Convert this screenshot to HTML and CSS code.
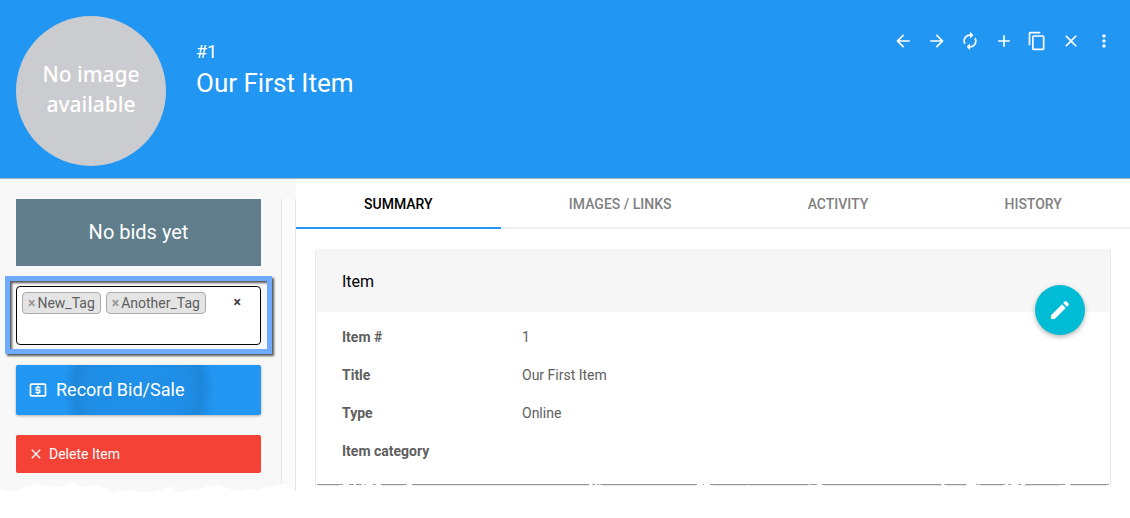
FILE: index.html
```html
<!DOCTYPE html>
<html lang="en">
<head>
	<meta charset="UTF-8">
	<title>Our First Item</title>
	<link rel="stylesheet" href="styles.css">
</head>
<body>
	<header class="header">
		<div class="avatar">No image available</div>
		<div class="heading">
			<div class="number">#1</div>
			<h1>Our First Item</h1>
		</div>
		<div class="toolbar">
			<button type="button" aria-label="Previous"><svg viewBox="0 0 24 24"><path d="M20 11H7.8l5.6-5.6L12 4l-8 8 8 8 1.4-1.4L7.8 13H20z"/></svg></button>
			<button type="button" aria-label="Next"><svg viewBox="0 0 24 24"><path d="M12 4l-1.4 1.4 5.6 5.6H4v2h12.2l-5.6 5.6L12 20l8-8z"/></svg></button>
			<button type="button" aria-label="Refresh"><svg viewBox="0 0 24 24"><path d="M12 6v3l4-4-4-4v3c-4.42 0-8 3.58-8 8 0 1.57.46 3.03 1.24 4.26L6.7 14.8A5.87 5.87 0 0 1 6 12c0-3.31 2.69-6 6-6zm6.76 1.74L17.3 9.2c.44.84.7 1.79.7 2.8 0 3.31-2.69 6-6 6v-3l-4 4 4 4v-3c4.42 0 8-3.58 8-8 0-1.57-.46-3.03-1.24-4.26z"/></svg></button>
			<button type="button" aria-label="Add"><svg viewBox="0 0 24 24"><path d="M19 13h-6v6h-2v-6H5v-2h6V5h2v6h6z"/></svg></button>
			<button type="button" aria-label="Copy"><svg viewBox="0 0 24 24"><path d="M16 1H4c-1.1 0-2 .9-2 2v14h2V3h12V1zm3 4H8c-1.1 0-2 .9-2 2v14c0 1.1.9 2 2 2h11c1.1 0 2-.9 2-2V7c0-1.1-.9-2-2-2zm0 16H8V7h11v14z"/></svg></button>
			<button type="button" aria-label="Delete"><svg viewBox="0 0 24 24"><path d="M19 6.41L17.59 5 12 10.59 6.41 5 5 6.41 10.59 12 5 17.59 6.41 19 12 13.41 17.59 19 19 17.59 13.41 12z"/></svg></button>
			<button type="button" aria-label="More"><svg viewBox="0 0 24 24"><path d="M12 8c1.1 0 2-.9 2-2s-.9-2-2-2-2 .9-2 2 .9 2 2 2zm0 2c-1.1 0-2 .9-2 2s.9 2 2 2 2-.9 2-2-.9-2-2-2zm0 6c-1.1 0-2 .9-2 2s.9 2 2 2 2-.9 2-2-.9-2-2-2z"/></svg></button>
		</div>
	</header>

	<div class="page">
		<aside class="sidebar">
			<div class="actions">
				<div class="bids">No bids yet</div>
				<div class="highlight">
					<div class="tags">
						<ul>
							<li><button type="button" aria-label="Remove New_Tag">×</button>New_Tag</li>
							<li><button type="button" aria-label="Remove Another_Tag">×</button>Another_Tag</li>
						</ul>
						<button type="button" class="clear" aria-label="Remove all tags">×</button>
						<input type="text" aria-label="Tags">
					</div>
				</div>
				<button type="button" class="btn record">
					<svg viewBox="0 0 24 24"><path d="M20 4H4c-1.1 0-2 .9-2 2v12c0 1.1.9 2 2 2h16c1.1 0 2-.9 2-2V6c0-1.1-.9-2-2-2zm0 14H4V6h16v12zm-9-1h2v-1h1c.55 0 1-.45 1-1v-3c0-.55-.45-1-1-1h-3v-1h4V8h-2V7h-2v1h-1c-.55 0-1 .45-1 1v3c0 .55.45 1 1 1h3v1H9v2h2v1z"/></svg>
					Record Bid/Sale
				</button>
				<button type="button" class="btn delete">
					<svg viewBox="0 0 24 24"><path d="M19 6.41L17.59 5 12 10.59 6.41 5 5 6.41 10.59 12 5 17.59 6.41 19 12 13.41 17.59 19 19 17.59 13.41 12z"/></svg>
					Delete Item
				</button>
			</div>
			<div class="track"></div>
			<svg class="torn" viewBox="0 0 296 13" preserveAspectRatio="none"><path d="M0 6L2 8 5 9 8 9 11 10 14 8 18 8 21 7 24 5 26 5 28 4 31 4 32 2 36 1 38 3 40 3 44 3 46 4 49 3 51 5 57 5 59 5 61 4 65 4 67 2 69 3 70 1 74 1 76 3 77 3 81 5 84 5 86 4 90 5 92 3 94 4 97 3 98 4 103 6 106 6 108 8 110 9 112 11 114 11 116 9 120 9 124 8 127 9 132 8 135 8 137 10 141 10 144 9 149 10 151 9 154 11 156 8 160 8 163 7 165 5 167 6 170 5 172 5 174 8 176 8 178 10 181 10 184 9 187 9 190 7 196 7 199 7 204 6 207 4 210 5 213 3 215 3 219 2 221 4 223 5 226 5 229 6 231 8 234 8 237 8 240 9 243 9 246 7 250 7 253 7 256 8 259 8 262 6 265 6 268 5 270 5 273 4 276 4 279 2 286 2 288 5 290 5 294 9 296 9V13H0z"/></svg>
		</aside>

		<main class="main">
			<nav class="tabs">
				<a href="#summary" class="active">Summary</a>
				<a href="#images">Images / Links</a>
				<a href="#activity">Activity</a>
				<a href="#history">History</a>
			</nav>
			<section class="card" id="summary">
				<h2>Item</h2>
				<dl>
					<dt>Item #</dt>
					<dd>1</dd>
					<dt>Title</dt>
					<dd>Our First Item</dd>
					<dt>Type</dt>
					<dd>Online</dd>
					<dt>Item category</dt>
					<dd></dd>
				</dl>
				<svg class="edge" viewBox="0 0 796 2" preserveAspectRatio="none"><path class="dark" d="M1 .5h26m6 0h5m2 0h6m3 0h1m7 0h3m5 0h26m5 0h178m3 0h3m2 0h2m1 0h97m6 0h1m6 0h99m1 0h7m5 0h120m3 0h22m10 0h2m1 0h26m3 0h3m7 0h3m4 0h40m5 0h39"/><path class="light" d="M3 1.500h20m43 0h22m9 0h176m14 0h94m17 0h34m3 0h58m16 0h118m5 0h20m14 0h22m21 0h36m12 0h35"/></svg>
				<button type="button" class="edit" aria-label="Edit"><svg viewBox="0 0 24 24"><path d="M3 17.250V21h3.750L17.810 9.940l-3.750-3.750L3 17.250zM20.710 7.040a1 1 0 0 0 0-1.410l-2.340-2.340a1 1 0 0 0-1.410 0l-1.830 1.830 3.750 3.750 1.830-1.830z"/></svg></button>
			</section>
		</main>
	</div>
</body>
</html>
```
FILE: styles.css
```css
*{
	box-sizing: border-box;
}
body{
	margin:0;
	background-color: #fff;
	color:#5e5e5e;
	font:14px/20px Roboto, sans-serif;
}
button{
	padding:0;
	border:0;
	background:none;
	color:inherit;
	font:inherit;
	cursor: pointer;
}
svg{
	display: block;
	fill:currentColor;
}
h1,h2,ul,dl,dd{
	margin:0;
	padding:0;
	font-weight: 400;
}

/* header */
.header{
	display: flex;
	align-items: flex-start;
	padding:16px 11px 12px 16px;
	background-color: #2196f3;
	border-bottom:1px solid #a9b1b8;
	color:#fff;
}
.avatar{
	display: flex;
	align-items: center;
	width:150px;
	height:150px;
	padding:0 20px 4px;
	border-radius: 50%;
	background-color: #cbccd0;
	font:500 21px/30px "Noto Sans", sans-serif;
	text-align: center;
}
.heading{
	flex:1;
	padding:24px 0 0 30px;
}
.number{
	font-size:18px;
	line-height:24px;
}
h1{
	font-size:26px;
	line-height:38px;
}
.toolbar{
	padding-top:10px;
	white-space: nowrap;
}
.toolbar button{
	width:30px;
	height:30px;
	vertical-align: top;
}
.toolbar svg{
	width:20px;
	height:20px;
	margin:0 auto;
}

.page{
	display: flex;
	align-items: flex-start;
}

/* sidebar */
.sidebar{
	position: relative;
	display: flex;
	flex:0 0 296px;
	background-color: #f8f8f8;
}
.actions{
	display: flex;
	flex:1;
	flex-direction: column;
	gap:20px;
	padding:20px 20px 22px 16px;
}
.track{
	width:15px;
	margin-top:20px;
	background-color: #fafafa;
	border:solid #e6e6e6;
	border-width:0 1px;
}
.torn{
	position: absolute;
	left:0;
	bottom:0;
	width:100%;
	height:13px;
	fill:#fff;
}
.bids{
	background-color: #607d8b;
	color:#fff;
	font-size:20px;
	line-height:67px;
	text-align: center;
}
.highlight{
	position: relative;
}
.highlight::before{
	content:"";
	position: absolute;
	inset:-10px -11px -9px;
	border:5px solid #6facff;
	filter:drop-shadow(2px 2px 1px #555);
	pointer-events: none;
}
.tags{
	position: relative;
	display: flex;
	flex-wrap: wrap;
	justify-content: space-between;
	padding:5px;
	border:1px solid #000;
	border-radius: 4px;
	background-color: #fff;
}
.tags ul{
	display: flex;
	gap:5px;
	list-style: none;
}
.tags li{
	display: flex;
	padding:0 5px;
	border:1px solid #aaa;
	border-radius: 4px;
	background-color: #e4e4e4;
}
.tags li button{
	margin-right:2px;
	color:#999;
	font-weight: 700;
}
.tags .clear{
	height:20px;
	margin-right:14px;
	color:#444;
	font-weight: 700;
}
.tags input{
	width:100%;
	height:25px;
	padding:0;
	border:0;
	background:none;
	outline:0;
	font:inherit;
}
.btn{
	display: flex;
	align-items: center;
	border-radius: 2px;
	color:#fff;
}
.record{
	height:50px;
	padding:0 12px;
	gap:8px;
	background:#2196f3 radial-gradient(circle at 50% 50%, rgba(0,0,0,.04) 0, rgba(0,0,0,.06) 50px, rgba(0,0,0,.1) 64px, rgba(0,0,0,0) 76px);
	box-shadow:0 1px 3px rgba(0,0,0,.3);
	font-size:18px;
}
.record svg{
	width:20px;
	height:20px;
}
.delete{
	height:38px;
	padding:0 12px;
	gap:5px;
	background-color: #f44336;
}
.delete svg{
	width:16px;
	height:16px;
}

/* content */
.main{
	flex:1;
	min-width:0;
}
.tabs{
	display: flex;
}
.tabs a{
	flex:1 1 auto;
	height:50px;
	border-bottom:2px solid #eee;
	color:#7f7f7f;
	font-weight: 500;
	line-height:50px;
	text-align: center;
	text-decoration: none;
	text-transform: uppercase;
}
.tabs .active{
	border-color:#2196f3;
	color:#000;
}
.card{
	position: relative;
	margin:20px 19px;
	border:solid #e9e9e9;
	border-width:0 1px;
	border-radius: 2px 2px 0 0;
}
h2{
	height:63px;
	padding:0 26px;
	background-color: #f6f6f6;
	color:#000;
	font-size:16px;
	line-height:65px;
}
dl{
	display: grid;
	grid-template-columns: 180px 1fr;
	padding:6px 26px 14px;
	line-height:38px;
}
dt{
	font-weight: 700;
}
.edge{
	width:100%;
	height:2px;
	fill:none;
}
.edge .dark{
	stroke:#999;
}
.edge .light{
	stroke:#e4e4e4;
}
.edit{
	position: absolute;
	top:36px;
	right:25px;
	width:50px;
	height:50px;
	border-radius: 50%;
	background-color: #00bcd4;
	box-shadow:0 2px 5px rgba(0,0,0,.3);
	color:#fff;
}
.edit svg{
	width:24px;
	height:24px;
	margin:0 auto;
}
```
